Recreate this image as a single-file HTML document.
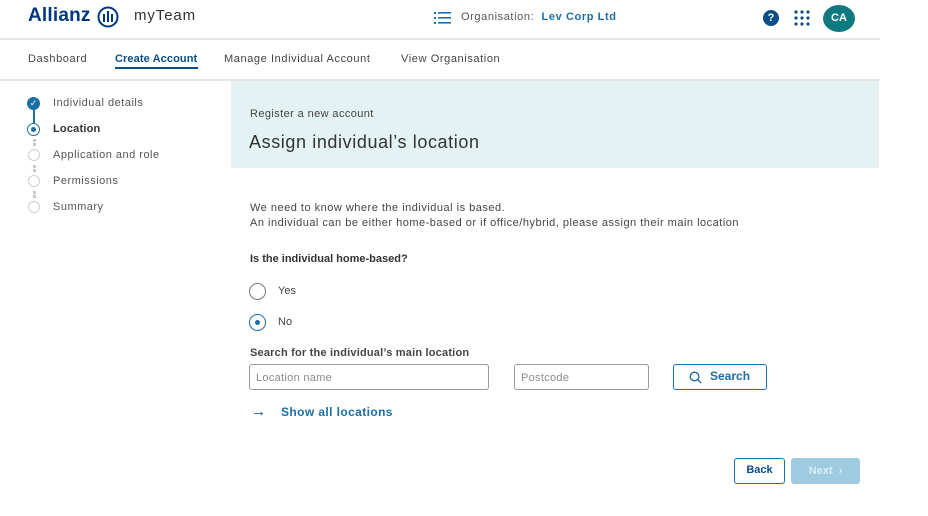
<!DOCTYPE html>
<html><head><meta charset="utf-8"><style>
*{margin:0;padding:0;box-sizing:border-box}
body{width:928px;height:516px;background:#fff;font-family:"Liberation Sans",sans-serif;position:relative;overflow:hidden;color:#414141}
.a{position:absolute;white-space:nowrap}
.hl{position:absolute;left:0;width:880px;height:2px;background:#e6e6e6}
.circ{position:absolute;width:12px;height:12px;border-radius:50%;border:1.5px solid #cfcfcf;background:#fff}
.dot{position:absolute;width:3px;height:3px;background:#c8c8c8;left:33px}
.inp{position:absolute;border:1.5px solid #9a9a9a;border-radius:3px;font-size:11px;color:#8a8a8a;padding:7px 6px;letter-spacing:0.3px}
.tab{font-size:11px;letter-spacing:0.6px;top:53px;color:#444}
.st{font-size:11px;letter-spacing:0.5px;color:#555}
</style></head><body>
<div class="a" style="left:28px;top:5px;font-size:19px;font-weight:bold;color:#003781;letter-spacing:0.2px">Allianz</div>
<svg class="a" style="left:97px;top:6px" width="22" height="22" viewBox="0 0 22 22"><circle cx="11" cy="11" r="9.5" fill="none" stroke="#003781" stroke-width="2"/><rect x="6" y="8" width="2" height="8" fill="#003781"/><rect x="10" y="5" width="2" height="11" fill="#003781"/><rect x="14" y="8" width="2" height="8" fill="#003781"/></svg>
<div class="a" style="left:134px;top:7px;font-size:15px;color:#333;letter-spacing:0.9px">myTeam</div>
<svg class="a" style="left:434px;top:11px" width="18" height="14" viewBox="0 0 18 14"><g fill="#1a6fa8"><rect x="0" y="1" width="2" height="2"/><rect x="0" y="6" width="2" height="2"/><rect x="0" y="11" width="2" height="2"/><rect x="4" y="1" width="13" height="1.6"/><rect x="4" y="6" width="13" height="1.6"/><rect x="4" y="11" width="13" height="1.6"/></g></svg>
<div class="a" style="left:461px;top:11px;font-size:11px;color:#555;letter-spacing:0.6px">Organisation:&nbsp; <span style="color:#1a6fa8;font-weight:bold">Lev Corp Ltd</span></div>
<div class="a" style="left:763px;top:10px;width:16px;height:16px;border-radius:50%;background:#0b4d87;color:#fff;font-size:11px;font-weight:bold;text-align:center;line-height:16px">?</div>
<svg class="a" style="left:794px;top:10px" width="16" height="16"><g fill="#0b4d87"><circle cx="2" cy="2" r="1.6"/><circle cx="8" cy="2" r="1.6"/><circle cx="14" cy="2" r="1.6"/><circle cx="2" cy="8" r="1.6"/><circle cx="8" cy="8" r="1.6"/><circle cx="14" cy="8" r="1.6"/><circle cx="2" cy="14" r="1.6"/><circle cx="8" cy="14" r="1.6"/><circle cx="14" cy="14" r="1.6"/></g></svg>
<div class="a" style="left:823px;top:5px;width:32px;height:27px;border-radius:50%;background:#0e7a80;color:#fff;font-size:11px;font-weight:bold;text-align:center;line-height:27px">CA</div>
<div class="hl" style="top:38px"></div>
<div class="a tab" style="left:28px">Dashboard</div>
<div class="a tab" style="left:115px;color:#0b4d87;font-weight:bold;letter-spacing:0.1px">Create Account</div>
<div class="a" style="left:115px;top:67px;width:83px;height:2px;background:#0b4d87"></div>
<div class="a tab" style="left:224px">Manage Individual Account</div>
<div class="a tab" style="left:401px">View Organisation</div>
<div class="hl" style="top:79px"></div>
<!-- stepper -->
<div class="a" style="left:33px;top:104px;width:2px;height:24px;background:#1a6fa8"></div>
<div class="a" style="left:27px;top:97px;width:13px;height:13px;border-radius:50%;background:#1a6fa8;color:#fff;font-size:9px;line-height:13px;text-align:center">✓</div>
<div class="a" style="left:27px;top:123px;width:13px;height:13px;border-radius:50%;border:1.5px solid #1a6fa8;background:#fff"><div style="position:absolute;left:2.5px;top:2.5px;width:5px;height:5px;border-radius:50%;background:#1a6fa8"></div></div>
<div class="dot" style="top:139px"></div><div class="dot" style="top:143px"></div>
<div class="circ" style="left:28px;top:149px"></div>
<div class="dot" style="top:165px"></div><div class="dot" style="top:169px"></div>
<div class="circ" style="left:28px;top:175px"></div>
<div class="dot" style="top:191px"></div><div class="dot" style="top:195px"></div>
<div class="circ" style="left:28px;top:201px"></div>
<div class="a st" style="left:53px;top:97px">Individual details</div>
<div class="a st" style="left:53px;top:123px;color:#333;font-weight:bold;letter-spacing:0.2px">Location</div>
<div class="a st" style="left:53px;top:149px">Application and role</div>
<div class="a st" style="left:53px;top:175px">Permissions</div>
<div class="a st" style="left:53px;top:201px">Summary</div>
<!-- banner -->
<div class="a" style="left:231px;top:81px;width:648px;height:87px;background:#e4f2f3"></div>
<div class="a" style="left:250px;top:108px;font-size:11px;color:#444;letter-spacing:0.4px">Register a new account</div>
<div class="a" style="left:249px;top:132px;font-size:18px;color:#333;letter-spacing:0.6px">Assign individual’s location</div>
<div class="a" style="left:250px;top:202px;font-size:11px;color:#444;letter-spacing:0.5px">We need to know where the individual is based.</div>
<div class="a" style="left:250px;top:217px;font-size:11px;color:#444;letter-spacing:0.5px">An individual can be either home-based or if office/hybrid, please assign their main location</div>
<div class="a" style="left:250px;top:253px;font-size:11px;color:#333;font-weight:bold">Is the individual home-based?</div>
<div class="a" style="left:249px;top:283px;width:17px;height:17px;border-radius:50%;border:1.5px solid #777"></div>
<div class="a" style="left:278px;top:285px;font-size:11px;color:#444">Yes</div>
<div class="a" style="left:249px;top:314px;width:17px;height:17px;border-radius:50%;border:1.5px solid #1a6fa8"><div style="position:absolute;left:4.5px;top:4.5px;width:5px;height:5px;border-radius:50%;background:#1a6fa8"></div></div>
<div class="a" style="left:278px;top:316px;font-size:11px;color:#444">No</div>
<div class="a" style="left:250px;top:347px;font-size:11px;color:#444;font-weight:bold;letter-spacing:0.2px">Search for the individual’s main location</div>
<div class="inp" style="left:249px;top:364px;width:240px;height:26px">Location name</div>
<div class="inp" style="left:514px;top:364px;width:135px;height:26px">Postcode</div>
<div class="a" style="left:673px;top:364px;width:94px;height:26px;border:1.5px solid #1a6fa8;border-radius:3px;font-size:12px;color:#1a6fa8;font-weight:bold;line-height:23px;padding-left:36px">Search</div>
<svg class="a" style="left:689px;top:371px" width="13" height="13"><circle cx="5.5" cy="5.5" r="4.3" fill="none" stroke="#1a6fa8" stroke-width="1.4"/><path d="M8.6 8.6L12 12" stroke="#1a6fa8" stroke-width="1.4"/></svg>
<div class="a" style="left:251px;top:403px;font-size:15px;color:#0b4d87;font-weight:bold">→</div>
<div class="a" style="left:281px;top:405px;font-size:12px;color:#1a6fa8;font-weight:bold;letter-spacing:0.4px">Show all locations</div>
<div class="a" style="left:734px;top:458px;width:51px;height:26px;border:1.5px solid #1a6fa8;border-radius:3px;font-size:11px;color:#0b4d87;font-weight:bold;text-align:center;line-height:23px">Back</div>
<div class="a" style="left:791px;top:458px;width:69px;height:26px;background:#9fcbe0;border-radius:3px;font-size:11px;color:#dbeef6;font-weight:bold;text-align:center;line-height:26px">Next &nbsp;›</div>
</body></html>
